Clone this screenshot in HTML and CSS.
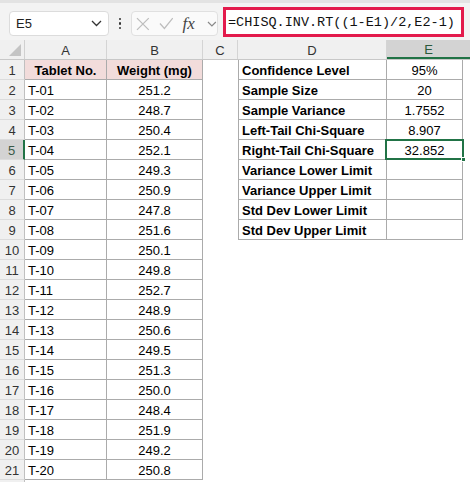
FILE: index.html
```html
<!DOCTYPE html>
<html>
<head>
<meta charset="utf-8">
<link rel="stylesheet" href="styles.css">
</head>
<body>
<div class="toolbar">
  <div class="namebox">
    <span class="nb-text">E5</span>
    <svg class="chev" width="11" height="7" viewBox="0 0 11 7"><path d="M1 1 L5.5 5.5 L10 1" fill="none" stroke="#333" stroke-width="1.3"/></svg>
  </div>
  <div class="dots"><i></i><i></i><i></i></div>
  <div class="fbtns">
    <svg width="14" height="14" viewBox="0 0 14 14"><path d="M1 1 L13 13 M13 1 L1 13" stroke="#bdbdbd" stroke-width="1.3" fill="none"/></svg>
    <svg width="15" height="13" viewBox="0 0 15 13"><path d="M1 6.5 L5.5 11.5 L14 1" stroke="#bdbdbd" stroke-width="1.3" fill="none"/></svg>
    <span class="fx">fx</span>
    <svg width="10" height="6" viewBox="0 0 10 6"><path d="M1 1 L5 5 L9 1" fill="none" stroke="#888" stroke-width="1.2"/></svg>
  </div>
  <div class="formula">=CHISQ.INV.RT((1-E1)/2,E2-1)</div>
</div>
<div class="sheet">
  <div class="hrow">
    <div class="corner"><span class="tri"></span></div>
    <div class="ch">A</div><div class="ch">B</div><div class="ch">C</div><div class="ch">D</div><div class="ch sel">E</div>
  </div>
  <div class="row"><div class="rh">1</div><div class="c t hd ctr">Tablet No.</div><div class="c t hd ctr">Weight (mg)</div><div class="c"></div><div class="c t td b">Confidence Level</div><div class="c t ctr">95%</div></div>
  <div class="row"><div class="rh">2</div><div class="c t ta">T-01</div><div class="c t ctr">251.2</div><div class="c"></div><div class="c t td b">Sample Size</div><div class="c t ctr">20</div></div>
  <div class="row"><div class="rh">3</div><div class="c t ta">T-02</div><div class="c t ctr">248.7</div><div class="c"></div><div class="c t td b">Sample Variance</div><div class="c t ctr">1.7552</div></div>
  <div class="row"><div class="rh">4</div><div class="c t ta">T-03</div><div class="c t ctr">250.4</div><div class="c"></div><div class="c t td b">Left-Tail Chi-Square</div><div class="c t ctr">8.907</div></div>
  <div class="row"><div class="rh rsel">5</div><div class="c t ta">T-04</div><div class="c t ctr">252.1</div><div class="c"></div><div class="c t td b">Right-Tail Chi-Square</div><div class="c t ctr active">32.852<span class="selbox"></span><span class="handle"></span></div></div>
  <div class="row"><div class="rh">6</div><div class="c t ta">T-05</div><div class="c t ctr">249.3</div><div class="c"></div><div class="c t td b">Variance Lower Limit</div><div class="c t ctr"></div></div>
  <div class="row"><div class="rh">7</div><div class="c t ta">T-06</div><div class="c t ctr">250.9</div><div class="c"></div><div class="c t td b">Variance Upper Limit</div><div class="c t ctr"></div></div>
  <div class="row"><div class="rh">8</div><div class="c t ta">T-07</div><div class="c t ctr">247.8</div><div class="c"></div><div class="c t td b">Std Dev Lower Limit</div><div class="c t ctr"></div></div>
  <div class="row"><div class="rh">9</div><div class="c t ta">T-08</div><div class="c t ctr">251.6</div><div class="c"></div><div class="c t td b">Std Dev Upper Limit</div><div class="c t ctr"></div></div>
  <div class="row"><div class="rh">10</div><div class="c t ta">T-09</div><div class="c t ctr">250.1</div></div>
  <div class="row"><div class="rh">11</div><div class="c t ta">T-10</div><div class="c t ctr">249.8</div></div>
  <div class="row"><div class="rh">12</div><div class="c t ta">T-11</div><div class="c t ctr">252.7</div></div>
  <div class="row"><div class="rh">13</div><div class="c t ta">T-12</div><div class="c t ctr">248.9</div></div>
  <div class="row"><div class="rh">14</div><div class="c t ta">T-13</div><div class="c t ctr">250.6</div></div>
  <div class="row"><div class="rh">15</div><div class="c t ta">T-14</div><div class="c t ctr">249.5</div></div>
  <div class="row"><div class="rh">16</div><div class="c t ta">T-15</div><div class="c t ctr">251.3</div></div>
  <div class="row"><div class="rh">17</div><div class="c t ta">T-16</div><div class="c t ctr">250.0</div></div>
  <div class="row"><div class="rh">18</div><div class="c t ta">T-17</div><div class="c t ctr">248.4</div></div>
  <div class="row"><div class="rh">19</div><div class="c t ta">T-18</div><div class="c t ctr">251.9</div></div>
  <div class="row"><div class="rh">20</div><div class="c t ta">T-19</div><div class="c t ctr">249.2</div></div>
  <div class="row"><div class="rh">21</div><div class="c t ta">T-20</div><div class="c t ctr">250.8</div></div>
  <div class="row"><div class="rh"></div></div>
</div>
</body>
</html>
```
FILE: styles.css
```css
* { box-sizing: border-box; }
html, body { margin: 0; padding: 0; background: #fff; }
body {
  width: 470px; height: 482px; overflow: hidden;
  font-family: "Liberation Sans", Arial, sans-serif;
  font-size: 13px; color: #000;
}
.toolbar {
  height: 40px;
  background: #f3f3f3;
  border-top: 3px solid #e3e3e3;
  display: flex; align-items: center;
  padding-left: 9px;
}
.namebox {
  width: 100px; height: 25px;
  background: #fff; border: 1px solid #dcdcdc; border-radius: 4px;
  display: flex; align-items: center; justify-content: space-between;
  padding: 0 6px 0 6px;
  margin-top: 4px;
}
.nb-text { font-size: 13px; color: #222; }
.dots { width: 22px; display: flex; flex-direction: column; align-items: center; gap: 2px; margin-top: 4px; }
.dots i { width: 2.5px; height: 2.5px; background: #333; border-radius: 50%; display: block; }
.fbtns {
  width: 87px; height: 25px; margin-top: 4px;
  background: #fafafa; border: 1px solid #e0e0e0; border-radius: 4px;
  display: flex; align-items: center; gap: 9px; padding-left: 4px;
}
.fx { font-family: "Liberation Serif", serif; font-style: italic; font-size: 17px; color: #444; width: 16px; }
.formula {
  margin-left: 5px; margin-top: 1px;
  width: 241px; height: 30px;
  background: #fff; border: 3px solid #e31b4c;
  font-family: "Liberation Mono", monospace; font-size: 13.5px; color: #111;
  display: flex; align-items: center; padding-left: 2px; white-space: nowrap;
}
.hrow, .row {
  display: grid;
  grid-template-columns: 25px 82px 96px 35px 149px 76px;
  height: 20px;
}
.hrow { grid-template-columns: 25px 82px 96px 35px 149px 83px; background: #f0f0f0; border-bottom: 1px solid #c8c8c8; }
.corner { position: relative; border-right: 1px solid #d0d0d0; }
.tri {
  position: absolute; right: 3px; bottom: 3px;
  width: 0; height: 0;
  border-left: 12px solid transparent; border-bottom: 12px solid #c4c4c4;
}
.ch {
  border-right: 1px solid #d4d4d4;
  display: flex; align-items: center; justify-content: center;
  font-size: 13px; color: #333; padding-top: 1px;
}
.ch.sel { background: #d3d3d3; border-bottom: 2px solid #217346; color: #2a5a3c; border-right: none; }
.rh {
  background: #f0f0f0; border-right: 1px solid #c0c0c0; border-bottom: 1px solid #dcdcdc;
  display: flex; align-items: center; justify-content: center;
  font-size: 13px; color: #333; padding-top: 2px;
}
.rh.rsel { background: #d3d3d3; border-right: 2px solid #217346; color: #3a5a48; }
.c { display: flex; align-items: center; padding-top: 2px; white-space: nowrap; }
.t { border-right: 1px solid #ababab; border-bottom: 1px solid #ababab; }
.ta { padding-left: 3px; }
.td { border-left: 1px solid #ababab; padding-left: 3px; }
.b { font-weight: bold; }
.ctr { justify-content: center; }
.hd { background: #f2dcdb; font-weight: bold; }
.active { position: relative; }
.selbox {
  position: absolute; left: -2px; top: -1px; right: -2px; bottom: -1px;
  border: 2px solid #217346;
}
.handle {
  position: absolute; right: -4px; bottom: -3px;
  width: 5px; height: 5px; background: #217346; border: 1px solid #fff;
}
```
